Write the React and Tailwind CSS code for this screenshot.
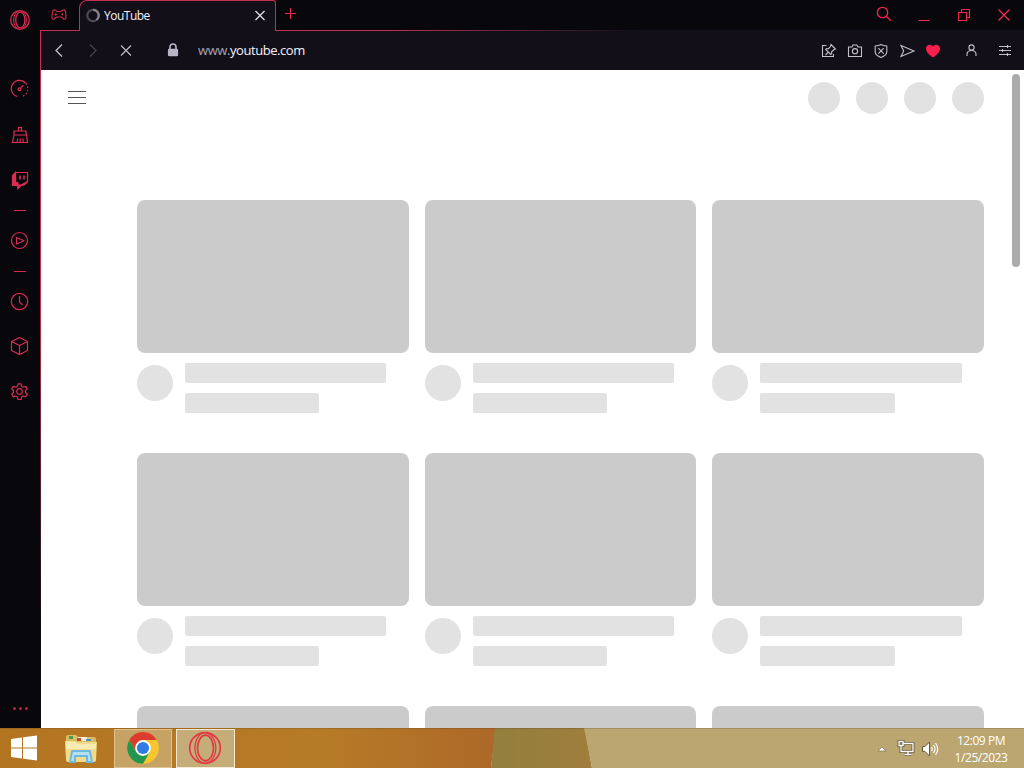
const cards = [0, 1, 2, 3, 4, 5, 6, 7, 8];

function Icon({ children, size = 20, className = "", width = 1.1 }) {
  return (
    <svg
      width={size}
      height={size}
      viewBox={`0 0 ${size} ${size}`}
      fill="none"
      stroke="currentColor"
      strokeWidth={width}
      className={`shrink-0 ${className}`}
    >
      {children}
    </svg>
  );
}

function Sidebar() {
  return (
    <div className="w-10 shrink-0 flex flex-col items-center bg-[#08070b] text-[#dc2b54]">
      <Icon size={22} className="mt-[9px]" width={1.3}>
        <circle cx="11" cy="11" r="9.3" />
        <ellipse cx="11.3" cy="11" rx="4.6" ry="7.8" />
        <path d="M9.5 2.2C3 5 3 17 9.5 19.8M12.5 2.2C19 5 19 17 12.5 19.8" strokeWidth="1" />
      </Icon>
      <Icon className="mt-[48px]" width={1.2}>
        <path d="M7.500 17.500A8.200 8.200 0 1 1 15.800 4.300" />
        <path d="M16 4.500A8.200 8.200 0 0 1 12 17.500" strokeDasharray="1.5 1.8" />
        <circle cx="9.5" cy="10.3" r="1.4" />
        <path d="M10.600 9.200l2.800-3" />
      </Icon>
      <Icon className="mt-[26px]" width={1.2}>
        <path d="M8.500 6V2.500h3V6M4 10V6h12v4M4 10h12.500l1 7.500H2.500L4 10zM7 17.500l.8-4M10.200 17.500v-4M13.300 17.500l-.4-4" />
      </Icon>
      <Icon className="mt-[25px]" width={1.2}>
        <path d="M5.500 2.500h12v9l-3.500 3.500h-3L8 18v-3H5.500z" />
        <path d="M2.500 5.500l3-3V12L8 13v2h3l6.500-3.500L14 15h-3l-3 3.500V15.500H2.500z" fill="currentColor" />
        <path d="M10 5.500v4M14 5.500v4" strokeWidth="1.6" />
      </Icon>
      <div className="mt-5 w-3 h-px bg-[#d92850]" />
      <Icon className="mt-[20px]" width={1.2}>
        <circle cx="9.5" cy="9.5" r="8" />
        <path d="M6.500 6.500v6.500l7.500-3.200z" strokeLinejoin="round" />
      </Icon>
      <div className="mt-5 w-3 h-px bg-[#d92850]" />
      <Icon className="mt-[20px]" width={1.2}>
        <circle cx="9.5" cy="9.5" r="8.2" />
        <path d="M9.500 4v6l3 3" />
      </Icon>
      <Icon className="mt-[24px]" width={1.2}>
        <path d="M9.500 1.500l8 4v9l-8 4-8-4v-9zM1.500 5.500l8 4 8-4M9.500 9.500v9" strokeLinejoin="round" />
      </Icon>
      <Icon className="mt-[26px]" width={1.2}>
        <circle cx="9.5" cy="9.5" r="2.8" />
        <path
          d="M8 1.800h3l.6 2.400 1.700 1 2.400-.8 1.600 2.700-1.800 1.600v1.800l1.800 1.700-1.600 2.600-2.400-.7-1.700 1L11 17.500H8l-.6-2.400-1.700-1-2.400.7-1.600-2.600 1.800-1.700V8.700L1.700 7.100l1.600-2.700 2.400.8 1.700-1z"
          strokeLinejoin="round"
        />
      </Icon>
      <div className="mt-[305px] flex gap-[3px]">
        <span className="size-[3px] rounded-full bg-[#b92346]" />
        <span className="size-[3px] rounded-full bg-[#b92346]" />
        <span className="size-[3px] rounded-full bg-[#b92346]" />
      </div>
    </div>
  );
}

function TabStrip() {
  return (
    <div className="h-[31px] shrink-0 flex bg-[#08070b] text-[#ef2850]">
      <div className="w-[38px] border-b border-[#c42d54] flex justify-center pt-[6px] pr-[2px]">
        <Icon className="text-[#c92a4e]" width={1.2}>
          <path d="M6 4L8 5.500h4L14 4c2-.4 2.500 1 2.800 3.500l.2 4c0 2-2 2.300-3 .8L12.800 11H7.200L6 12.300c-1 1.500-3 1.200-3-.8l.2-4C3.500 5 4 3.600 6 4z" />
          <path d="M6.800 7v3M5.300 8.500h3M12 8.500h2M13.500 7v2.500" strokeWidth=".9" />
        </Icon>
      </div>
      <div className="w-[197px] flex border border-b-0 border-[#c42d54] rounded-tl-lg rounded-tr-[3px] bg-[#120f19] pl-[5px] pr-2">
        <Icon size={16} width={2.2} className="mt-[6px] text-[#4b4955]">
          <circle cx="8" cy="8.5" r="5.7" />
          <path d="M8 2.800A5.700 5.700 0 0 1 11.500 13" className="text-[#84828c]" stroke="currentColor" />
        </Icon>
        <span className="ml-[3px] mt-[7px] text-xs leading-4 tracking-[-0.5px] text-[#f4f2f8]">YouTube</span>
        <Icon size={14} className="ml-auto mt-[7px] text-[#e8e6ed]" width={1.2}>
          <path d="M2.500 3l9 9M11.500 3l-9 9" />
        </Icon>
      </div>
      <div className="grow flex flex-col">
        <div className="h-[30px] flex items-start">
          <Icon size={14} className="ml-2 mt-[7px]">
            <path d="M6.500 1v11M1 6.500h11" />
          </Icon>
          <div className="ml-auto flex gap-5 pr-[10px] pt-[5px]">
            <Icon width={1.3}>
              <circle cx="8.5" cy="7.5" r="5.2" />
              <path d="M12.200 11.200l4.800 4.600" />
            </Icon>
            <Icon>
              <path d="M4.500 15.500h11" />
            </Icon>
            <Icon>
              <path d="M4.500 7.500h8v8h-8zM7.500 7.500v-3h8v8h-3" />
            </Icon>
            <Icon width={1.3}>
              <path d="M4.500 4.500l11 11M15.500 4.500l-11 11" />
            </Icon>
          </div>
        </div>
        <div className="h-px bg-linear-to-r from-[#c42d54] from-15% to-[#120f19] to-48%" />
      </div>
    </div>
  );
}

function AddressBar() {
  return (
    <div className="h-[39px] shrink-0 flex items-center bg-[#120f19] text-[#c3c0cd] pl-2 pr-[9px]">
      <Icon width={1.3}>
        <path d="M13 3.500L7 9.500l6 6" />
      </Icon>
      <Icon className="ml-[14px] text-[#44414d]" width={1.3}>
        <path d="M7 3.500l6 6-6 6" />
      </Icon>
      <Icon className="ml-[13px]">
        <path d="M5 4.500l10 10M15 4.500l-10 10" />
      </Icon>
      <Icon className="ml-[27px] text-[#b9b4c8]" width={1.6}>
        <path d="M7 8.500V6a3 3 0 0 1 6 0v2.500" />
        <rect x="5.7" y="8.5" width="8.6" height="6" rx=".5" fill="currentColor" />
      </Icon>
      <span className="ml-[15px] text-[13px] tracking-[-0.43px] text-[#a8a5b2]">
        www.<span className="text-[#f5f3fa]">youtube.com</span>
      </span>
      <div className="ml-auto flex items-center gap-[6px]">
        <Icon>
          <path d="M7.500 4.500h-4v11h11V13" />
          <path d="M12 3.500l4.500 4.500-1.500.5-2.500 2.500.2 1.800-1 .7-5-5 1-1 1.800.2L11.500 5.500zM9.200 11.200L6.500 14" />
        </Icon>
        <Icon>
          <path d="M3.500 6h3.500l1-2h4l1 2h3.500v9.500h-13z" />
          <circle cx="10" cy="10.200" r="2.6" />
        </Icon>
        <Icon>
          <path d="M10 3.500c2 1 4 1.300 5.800 1.500v6c0 2.500-3.300 4.500-5.800 5.500-2.500-1-5.800-3-5.800-5.500V5C6 4.800 8 4.500 10 3.500z" />
          <path d="M7.300 7.200l5.400 5.400M12.700 7.200l-5.400 5.400" />
        </Icon>
        <Icon>
          <path d="M4 4.500L17 10 4 15.500 6.700 10z" />
        </Icon>
        <Icon className="text-[#fa1e4e]">
          <path
            d="M10 16.500C7 14.500 3 11.500 3 7.500c0-4 5-5 7-2 2-3 7-2 7 2 0 4-4 7-7 9z"
            fill="currentColor"
            stroke="none"
          />
        </Icon>
        <Icon className="ml-[13px]">
          <circle cx="9.5" cy="6.500" r="2.6" />
          <path d="M5 15v-1.500c0-2.500 2-4 4.500-4s4.500 1.500 4.500 4V15" />
        </Icon>
        <Icon className="ml-[7px]">
          <path d="M4 5.500h12M4 9.500h12M4 13.500h12M12.500 4v3M7.500 8v3M12.500 12v3" />
        </Icon>
      </div>
    </div>
  );
}

function Card() {
  return (
    <div>
      <div className="h-[153px] rounded-lg bg-[#cbcbcb]" />
      <div className="mt-[10px] flex h-[90px]">
        <div className="mt-[2px] size-9 rounded-full bg-[#e2e2e2]" />
        <div className="ml-3 grow">
          <div className="w-[90%] h-5 rounded-[2px] bg-[#e2e2e2]" />
          <div className="mt-[10px] w-[60%] h-5 rounded-[2px] bg-[#e2e2e2]" />
        </div>
      </div>
    </div>
  );
}

function Page() {
  return (
    <div className="grow min-h-0 flex overflow-hidden bg-white">
      <div className="w-[943px] shrink-0">
        <div className="h-[130px] flex justify-between pl-[27px] pt-3">
          <div className="mt-[9px] flex flex-col gap-[5px]">
            <div className="w-[18px] h-px bg-[#555]" />
            <div className="w-[18px] h-px bg-[#555]" />
            <div className="w-[18px] h-px bg-[#555]" />
          </div>
          <div className="flex gap-4">
            {cards.slice(0, 4).map((n) => (
              <div key={n} className="size-8 rounded-full bg-[#e2e2e2]" />
            ))}
          </div>
        </div>
        <div className="ml-24 grid grid-cols-3 gap-x-4">
          {cards.map((n) => (
            <Card key={n} />
          ))}
        </div>
      </div>
      <div className="ml-auto mr-1 mt-1 w-2 h-[193px] rounded-full bg-[#ababab]" />
    </div>
  );
}

function Explorer() {
  return (
    <svg width="34" height="32" viewBox="0 0 34 32">
      <path d="M2 4q0-2 2-2h8l2 2h16q2 0 2 2v20q0 2-2 2H4q-2 0-2-2z" fill="#d9bd66" />
      <path d="M5 3h4v3H5z" fill="#4a9c54" />
      <path d="M14 4h9v4h-9z" fill="#f7efd5" />
      <path d="M13 5h4v3h-4z" fill="#c84a2c" />
      <path d="M22 6h5v2h-5z" fill="#4c94bb" />
      <path d="M1 8h10l2 1h20l-1 18q0 2-2 2H4q-2 0-2-2z" fill="#f2dc8b" />
      <path d="M2 9h9l2 2h19v5H2z" fill="#f9ebb4" />
      <path d="M5 30l2-12q0-1 2-1h16q2 0 2 1l2 12h-7v-6H12v6z" fill="#6eb8df" />
      <path d="M7 28l2-9h16l2 9h-3v-6H10v6z" fill="#b5dff2" />
    </svg>
  );
}

function Chrome() {
  return (
    <svg width="32" height="32" viewBox="0 0 32 32">
      <circle cx="16" cy="16" r="15.8" fill="#f8c52c" />
      <path d="M16 8h13.700A15.800 15.800 0 0 0 2.300 8.100L9.200 20z" fill="#dc3c2d" />
      <path d="M2.300 8.100A15.800 15.800 0 0 0 16 31.800L22.800 20 16 23.500 9.200 20z" fill="#24964d" />
      <circle cx="16" cy="16" r="7.900" fill="#fff" />
      <circle cx="16" cy="16" r="6.100" fill="#307ce4" />
    </svg>
  );
}

function Taskbar() {
  return (
    <div className="relative h-10 shrink-0 overflow-hidden text-white">
      {/* wallpaper showing through the translucent bar */}
      <svg className="absolute inset-0" width="1024" height="40">
        <defs>
          <linearGradient id="wood">
            <stop offset="0" stopColor="#b47521" />
            <stop offset=".65" stopColor="#b67b27" />
            <stop offset="1" stopColor="#ad6828" />
          </linearGradient>
          <linearGradient id="olive">
            <stop offset="0" stopColor="#937f3e" />
            <stop offset="1" stopColor="#a07e3c" />
          </linearGradient>
        </defs>
        <path d="M0 0h496l-5 40H0z" fill="url(#wood)" />
        <path d="M495 0h90l7 40H491z" fill="url(#olive)" />
        <path d="M584 0h440v40H592z" fill="#bba570" />
        <path d="M0 .5h1024" stroke="#000" strokeOpacity=".12" />
      </svg>
      <div className="relative flex items-center w-full h-full">
        <svg className="ml-[10px]" width="28" height="28" viewBox="0 0 28 28" fill="#fff">
          <path d="M1 5l11-1.500v10H1zM13 3.300L27 1.500v12H13zM1 14.500h11v10L1 23zM13 14.500h14v12L13 24.700z" />
        </svg>
        <div className="ml-[26px] mt-[2px]">
          <Explorer />
        </div>
        <div className="ml-4 w-[58px] h-[39px] flex items-center justify-center border border-[#dfc28d] bg-[#c6a265]">
          <Chrome />
        </div>
        <div className="ml-1 w-[59px] h-[39px] flex items-center justify-center border border-[#f5ead1] bg-[#c5ad7a] text-[#e13a40]">
          <Icon size={34} width={1.7} className="mr-[2px]">
            <circle cx="17" cy="17" r="15.3" />
            <ellipse cx="17.5" cy="17" rx="8" ry="12.800" />
            <path d="M15.500 1.800C4 5 4 29 15.500 32.200M18.500 1.800C31 5 31 29 18.500 32.200" strokeWidth="1.3" />
          </Icon>
        </div>
        <svg className="ml-auto mt-[2px]" width="10" height="6" viewBox="0 0 10 6">
          <path d="M1 5l4-4 4 4z" fill="#fff" stroke="#756647" strokeWidth=".6" />
        </svg>
        <svg className="ml-[10px]" width="18" height="18" viewBox="0 0 18 18" fill="none">
          <path
            d="M6 4.500h10v8H5M11 12.500v3M7.500 15.500h7M2 2.500h4v4H2zM4 6.500v6h2"
            stroke="#65583d"
            strokeWidth="3"
          />
          <path
            d="M6 4.500h10v8H5M11 12.500v3M7.500 15.500h7M2 2.500h4v4H2zM4 6.500v6h2"
            stroke="#fff"
            strokeWidth="1.3"
          />
        </svg>
        <svg className="ml-[6px] mt-[2px]" width="18" height="18" viewBox="0 0 18 18">
          <path d="M1.500 6.500H4L8.500 2v14L4 11.500H1.500z" fill="#fff" stroke="#65583d" />
          <path
            d="M10.500 7q1.500 2 0 4M12.500 5q3 4 0 8M14.500 3q4.500 6 0 12"
            fill="none"
            stroke="#fff"
            strokeWidth="1.2"
          />
        </svg>
        <div className="ml-[11px] mr-[12px] w-[62px] mt-[2px] text-center text-xs leading-[17px] tracking-[-0.45px] whitespace-nowrap">
          <div>12:09 PM</div>
          <div>1/25/2023</div>
        </div>
      </div>
    </div>
  );
}

export default function App() {
  return (
    <div className="w-[1024px] h-[768px] flex flex-col overflow-hidden font-['Open_Sans','Noto_Sans',sans-serif]">
      <div className="h-[728px] flex">
        <Sidebar />
        <div className="w-px bg-[#08070b] pt-[30px]">
          <div className="h-full bg-linear-to-b from-[#c42d54] from-40% to-[#100c14] to-85%" />
        </div>
        <div className="grow flex flex-col">
          <TabStrip />
          <AddressBar />
          <Page />
        </div>
      </div>
      <Taskbar />
    </div>
  );
}
